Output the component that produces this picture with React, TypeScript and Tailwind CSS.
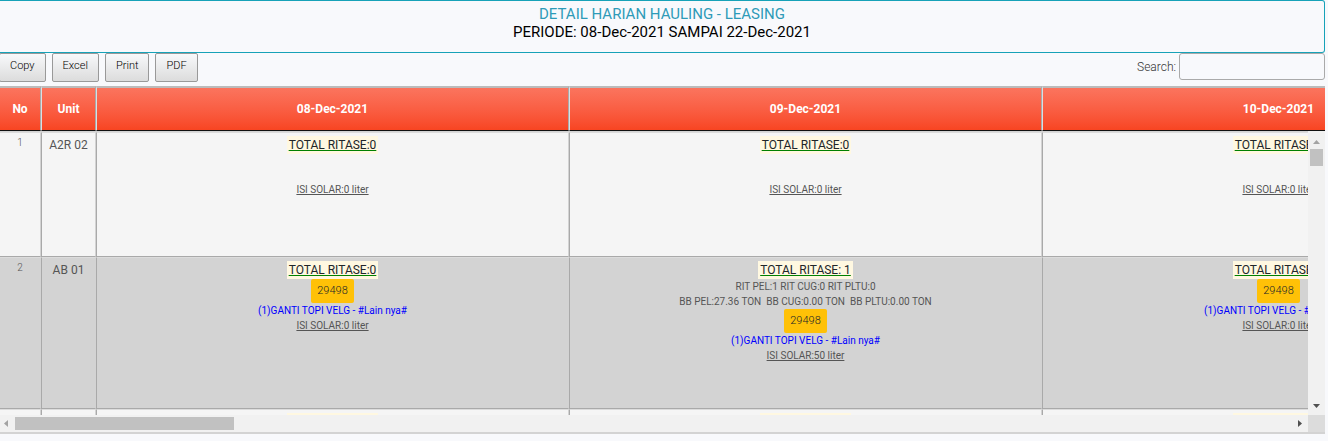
import React from "react";

type Day = {
  total: string;
  notes?: string[];
  job?: string;
  work?: string;
  fuel: string;
};
type Unit = { name: string; height: string; shade: string; days: Day[] };

const dates = ["08-Dec-2021", "09-Dec-2021", "10-Dec-2021"];

const idle: Day = { total: "TOTAL RITASE:0", fuel: "ISI SOLAR:0 liter" };
const repair: Day = {
  total: "TOTAL RITASE:0",
  job: "29498",
  work: "(1)GANTI TOPI VELG - #Lain nya#",
  fuel: "ISI SOLAR:0 liter",
};

const units: Unit[] = [
  { name: "A2R 02", height: "h-[125px]", shade: "bg-[#f5f5f5]", days: [idle, idle, idle] },
  {
    name: "AB 01",
    height: "h-[152px]",
    shade: "bg-[#d3d3d3]",
    days: [
      repair,
      {
        total: "TOTAL RITASE: 1",
        notes: [
          "RIT PEL:1 RIT CUG:0 RIT PLTU:0",
          "BB PEL:27.36 TON\u00a0 BB CUG:0.00 TON\u00a0 BB PLTU:0.00 TON",
        ],
        job: "29498",
        work: "(1)GANTI TOPI VELG - #Lain nya#",
        fuel: "ISI SOLAR:50 liter",
      },
      repair,
    ],
  },
  { name: "AB 02", height: "h-[125px]", shade: "bg-[#f5f5f5]", days: [idle, idle, idle] },
];

function Columns() {
  return (
    <colgroup>
      <col className="w-[41px]" />
      <col className="w-[55px]" />
      {dates.map((d) => (
        <col key={d} className="w-[473px]" />
      ))}
    </colgroup>
  );
}

function DayCell({ day }: { day: Day }) {
  return (
    <div className="flex flex-col items-center text-[10px] leading-[15px] text-[#555]">
      <span className="bg-[#fff8e1] px-[2px] text-[12px] leading-[18px] text-[#212529] underline decoration-[#008000]">
        {day.total}
      </span>
      {day.notes?.map((n) => <span key={n}>{n}</span>)}
      {day.job ? (
        <button className="h-6 rounded-[2px] bg-[#ffc107] px-[6px] pb-[2px] text-[11px] font-light text-[#212529]">
          {day.job}
        </button>
      ) : (
        <span className="h-[28px]" />
      )}
      {day.work && <span className="text-[#0000ff]">{day.work}</span>}
      <span className="underline">{day.fuel}</span>
    </div>
  );
}

export default function App() {
  return (
    <main className="min-h-screen overflow-hidden bg-[#f8f9fc] pr-[3px] font-['Roboto',sans-serif] text-[#212529]">
      <header className="h-[53px] rounded-r-[3px] border-y border-r border-[#17a2b8] pt-[4px] text-center text-[15px] leading-[18px]">
        <h1 className="text-[#2e9bb8]">DETAIL HARIAN HAULING - LEASING</h1>
        <p className="text-black">PERIODE: 08-Dec-2021 SAMPAI 22-Dec-2021</p>
      </header>

      <div className="flex h-[33px] items-start justify-between">
        <div className="-ml-px flex gap-[6px]">
          {["Copy", "Excel", "Print", "PDF"].map((label) => (
            <button
              key={label}
              className="h-[29px] rounded-[2px] border border-[#999] bg-linear-to-b from-[#f8f9fb] to-[#dcdcdc] px-[10px] pb-[2px] text-[11px] font-light text-black"
            >
              {label}
            </button>
          ))}
        </div>
        <label className="flex items-center gap-[3px] text-[12px] font-light text-[#333]">
          Search:
          <input className="h-[27px] w-[146px] rounded-[3px] border border-[#aaa] bg-transparent px-1" />
        </label>
      </div>

      <section>
        <div className="overflow-hidden">
          <table className="w-[1515px] table-fixed border-separate border-spacing-0 text-[12px] font-semibold text-white">
            <Columns />
            <thead>
              <tr className="h-[45px] bg-linear-to-b from-[#fb7660] to-[#f8431f]">
                {["No", "Unit", ...dates].map((h) => (
                  <th
                    key={h}
                    className="border-t-2 border-r border-b border-l border-t-[#bbb] border-r-[#aaa] border-b-[#111] border-l-[#d9dfe3] first:border-l-0"
                  >
                    {h}
                  </th>
                ))}
              </tr>
            </thead>
          </table>
        </div>

        <div className="grid grid-cols-[minmax(0,1fr)_17px] border-b-2 border-[#d3d3d3]">
          <div className="h-[284px] overflow-hidden border-t border-[#d3d3d3]">
            <table className="w-[1515px] table-fixed border-separate border-spacing-0 text-center text-[12px] text-[#555]">
              <Columns />
              <tbody className="[&_td]:border [&_td]:border-t-[#dcdcdc] [&_td]:border-r-[#d3d3d3] [&_td]:border-b-[#a9a9a9] [&_td]:border-l-[#a9a9a9] [&_td]:align-top [&_td:first-child]:border-l-0">
                {units.map((u, i) => (
                  <tr key={u.name} className={`${u.height} ${u.shade}`}>
                    <td className="pt-[2px] text-[10px] leading-[15px] font-light">{i + 1}</td>
                    <td className="pt-[3px] leading-[18px]">{u.name}</td>
                    {u.days.map((d, j) => (
                      <td key={j} className="pt-[3px]">
                        <DayCell day={d} />
                      </td>
                    ))}
                  </tr>
                ))}
              </tbody>
            </table>
          </div>
          <div className="flex flex-col items-center justify-between bg-[#f1f1f1]">
            <div className="flex flex-col items-center pt-px">
              <svg width="17" height="17" viewBox="0 0 17 17" fill="#a3a3a3"><path d="M5 12h7L8.500 8z" /></svg>
              <div className="h-[17px] w-[13px] bg-[#c1c1c1]" />
            </div>
            <svg width="17" height="17" viewBox="0 0 17 17" fill="#505050"><path d="M5 6h7l-3.500 4z" /></svg>
          </div>
          <div className="flex h-[17px] items-center justify-between bg-[#f1f1f1]">
            <div className="flex w-full items-center">
              <svg width="15" height="17" viewBox="0 0 15 17" fill="#a3a3a3"><path d="M8 5v7L4 8.500z" /></svg>
              <div className="h-[13px] w-[17%] bg-[#c1c1c1]" />
            </div>
            <svg className="shrink-0" width="17" height="17" viewBox="0 0 17 17" fill="#505050"><path d="M7 5v7l4-3.500z" /></svg>
          </div>
          <div className="bg-[#dcdcdc]" />
        </div>
      </section>
    </main>
  );
}
